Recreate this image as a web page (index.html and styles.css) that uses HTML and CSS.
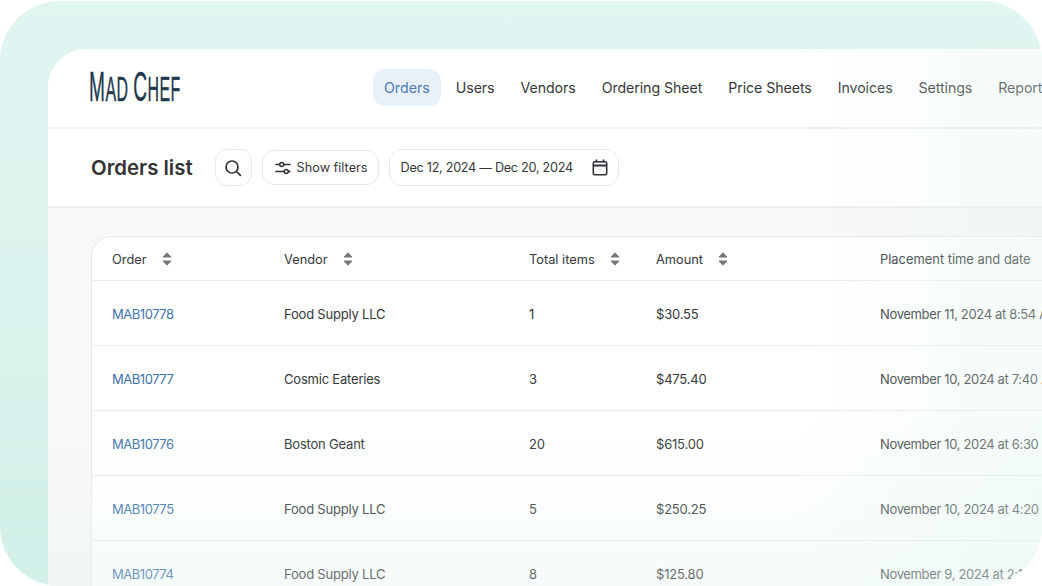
FILE: index.html
```html
<!DOCTYPE html>
<html lang="en">
<head>
<meta charset="utf-8">
<title>Mad Chef – Orders list</title>
<link rel="stylesheet" href="styles.css">
</head>
<body>
<svg class="defs" width="0" height="0" aria-hidden="true">
  <symbol id="sort" viewBox="0 0 10 14">
    <path d="M5 .8 9 5H1z" fill="#787878" stroke="#787878" stroke-width="1" stroke-linejoin="round"/>
    <path d="M5 13.2 1 9h8z" fill="#787878" stroke="#787878" stroke-width="1" stroke-linejoin="round"/>
  </symbol>
</svg>
<main class="frame">
  <div class="panel">
    <header class="topbar">
      <div class="logo"><span class="logo-text"><span class="cap">M</span>AD <span class="cap">C</span>HEF</span></div>
      <nav class="nav">
        <a class="nav-item active">Orders</a>
        <a class="nav-item">Users</a>
        <a class="nav-item">Vendors</a>
        <a class="nav-item">Ordering Sheet</a>
        <a class="nav-item">Price Sheets</a>
        <a class="nav-item">Invoices</a>
        <a class="nav-item">Settings</a>
        <a class="nav-item">Reports</a>
      </nav>
    </header>
    <section class="toolbar">
      <h1 class="title">Orders list</h1>
      <button class="btn btn-icon" aria-label="Search">
        <svg width="18" height="18" viewBox="0 0 18 18" fill="none" stroke="#2f3338" stroke-width="1.7" stroke-linecap="round"><circle cx="8" cy="8" r="6"/><path d="M12.5 12.5 16.4 16.4"/></svg>
      </button>
      <button class="btn btn-filter">
        <svg width="16" height="14" viewBox="0 0 16 14" fill="none" stroke="#2f3338" stroke-width="1.5" stroke-linecap="round"><path d="M1 3.5h3.5M9 3.5h6M1 10.500h8M13.500 10.500H15"/><circle cx="6.700" cy="3.500" r="2"/><circle cx="11.300" cy="10.500" r="2"/></svg>
        Show filters
      </button>
      <button class="btn btn-date">
        <span>Dec 12, 2024 — Dec 20, 2024</span>
        <svg width="16" height="17" viewBox="0 0 16 17" fill="none" stroke="#2f3338" stroke-width="1.600"><rect x="1.300" y="2.800" width="13.400" height="13" rx="1.500"/><path d="M1.300 6.500h13.400" stroke-width="2"/><path d="M4.500.5v3M11.500.5v3"/></svg>
      </button>
    </section>
    <section class="content">
      <div class="table">
        <div class="row head">
          <div class="cell">Order<svg class="sort"><use href="#sort"/></svg></div>
          <div class="cell">Vendor<svg class="sort"><use href="#sort"/></svg></div>
          <div class="cell">Total items<svg class="sort"><use href="#sort"/></svg></div>
          <div class="cell">Amount<svg class="sort"><use href="#sort"/></svg></div>
          <div class="cell">Placement time and date</div>
        </div>
        <div class="row"><a class="cell link">MAB10778</a><div class="cell">Food Supply LLC</div><div class="cell">1</div><div class="cell">$30.55</div><div class="cell">November 11, 2024 at 8:54 AM</div></div>
        <div class="row"><a class="cell link">MAB10777</a><div class="cell">Cosmic Eateries</div><div class="cell">3</div><div class="cell">$475.40</div><div class="cell">November 10, 2024 at 7:40 AM</div></div>
        <div class="row"><a class="cell link">MAB10776</a><div class="cell">Boston Geant</div><div class="cell">20</div><div class="cell">$615.00</div><div class="cell">November 10, 2024 at 6:30 AM</div></div>
        <div class="row"><a class="cell link">MAB10775</a><div class="cell">Food Supply LLC</div><div class="cell">5</div><div class="cell">$250.25</div><div class="cell">November 10, 2024 at 4:20 AM</div></div>
        <div class="row"><a class="cell link">MAB10774</a><div class="cell">Food Supply LLC</div><div class="cell">8</div><div class="cell">$125.80</div><div class="cell">November 9, 2024 at 2:15 AM</div></div>
      </div>
    </section>
  </div>
  <div class="fade"></div>
</main>
</body>
</html>
```
FILE: styles.css
```css
* { box-sizing: border-box; }
html, body { margin: 0; height: 100%; background: #fff; overflow: hidden; }
body { padding-top: 1px; font-family: Inter, "Liberation Sans", sans-serif; color: #35373a; }
.defs { position: absolute; }
.frame {
  position: relative;
  height: 585px;
  padding: 48px 0 0 48px;
  border-radius: 60px;
  overflow: hidden;
  background: linear-gradient(180deg, #e1f5f1 0%, #d9f2ec 60%, #cceee5 100%);
}
.panel {
  width: 1100px;
  height: 560px;
  overflow: hidden;
  background: #fff;
  border-top-left-radius: 38px;
}
.topbar {
  display: flex;
  align-items: center;
  height: 80px;
  padding: 0 0 2px 41px;
  border-bottom: 2px solid #efefef;
}
.logo { width: 284px; flex: none; padding-top: 2px; }
.logo-text {
  display: inline-block;
  font-family: "Liberation Sans", sans-serif;
  font-size: 35px;
  line-height: 40px;
  letter-spacing: 1px;
  color: #20384c;
  white-space: nowrap;
  -webkit-text-stroke: .4px #20384c;
  transform: scaleX(.455);
  transform-origin: left center;
}
.cap { font-size: 42px; }
.nav { display: flex; align-items: center; gap: 4px; white-space: nowrap; }
.nav-item {
  padding: 10px 11px;
  font-size: 14.200px;
  line-height: 17px;
  font-weight: 400;
  letter-spacing: -.08px;
  border-radius: 12px;
}
.nav-item.active { background: #e8f0fa; color: #4a78b8; letter-spacing: 0; }
.toolbar {
  display: flex;
  align-items: center;
  gap: 10px;
  height: 79px;
  padding: 0 0 0 43px;
  border-bottom: 2px solid #efefef;
}
.title { margin: 0 12px 0 0; font-size: 20.400px; font-weight: 600; color: #333; white-space: nowrap; }
.btn {
  display: flex;
  align-items: center;
  height: 37px;
  background: #fff;
  border: 1px solid #e8e8e8;
  border-radius: 12px;
  font: inherit;
  font-size: 12.700px;
  color: #35373a;
  white-space: nowrap;
}
.btn-icon { width: 37px; justify-content: center; padding: 0; }
.btn-filter { gap: 6px; width: 117px; height: 35px; padding: 0 0 0 12px; }
.btn-date { justify-content: space-between; width: 230px; padding: 0 10px 0 11px; letter-spacing: -.3px; }
.content { height: 400px; padding: 28px 0 0 43px; background: #f8f8f8; }
.table {
  background: #fff;
  border: 1px solid #e8e8e8;
  border-bottom: 0;
  border-top-left-radius: 20px;
  border-top-right-radius: 20px;
}
.row {
  display: grid;
  grid-template-columns: 172px 245px 127px 224px 1fr;
  align-items: center;
  height: 65px;
  padding: 2px 0 0 20px;
  border-bottom: 1px solid #ececec;
  font-size: 13px;
  letter-spacing: -.2px;
}
.row .cell:nth-child(5) { letter-spacing: -.35px; }
.row.head { height: 44px; padding-top: 1px; font-size: 12.800px; letter-spacing: 0; }
.row.head .cell:nth-child(5) { letter-spacing: 0; font-size: 12.900px; }
.cell { display: flex; align-items: center; white-space: nowrap; }
.sort { width: 10px; height: 14px; margin-left: 15px; }
.link { color: #3f72ad; letter-spacing: -.45px; }
.fade {
  position: absolute;
  inset: 0;
  pointer-events: none;
  background:
    linear-gradient(180deg, rgba(225,245,241,0) 70%, rgba(225,245,241,.3) 100%),
    linear-gradient(90deg, rgba(225,245,241,0) 76%, rgba(225,245,241,.36) 100%);
}
```
